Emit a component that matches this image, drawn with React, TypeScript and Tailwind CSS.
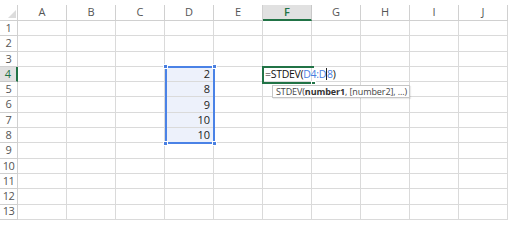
import React from 'react';

const cols = ['A', 'B', 'C', 'D', 'E', 'F', 'G', 'H', 'I', 'J'];
const rows = [1, 2, 3, 4, 5, 6, 7, 8, 9, 10, 11, 12, 13];
const values: Record<number, string> = { 4: '2', 5: '8', 6: '9', 7: '10', 8: '10' };

const Handle = ({ className }: { className: string }) => (
  <div className={`absolute w-[5px] h-[5px] bg-[#4a7fe0] border border-white ${className}`} />
);

export default function App() {
  return (
    <div className="relative w-[512px] h-[225px] bg-white overflow-hidden font-['Open_Sans','Noto_Sans',sans-serif]">
      <div className="pt-[5px]">
        <div className="grid grid-cols-[18px_repeat(10,49px)]">
          {/* corner */}
          <div className="relative h-[16px] border-r border-b border-[#d0d0d0]">
            <svg className="absolute right-[1px] bottom-[2px]" width="8" height="8" viewBox="0 0 8 8">
              <polygon points="8,0 8,8 0,8" fill="#dcdcdc" />
            </svg>
          </div>
          {cols.map((c) =>
            c === 'F' ? (
              <div
                key={c}
                className="h-[16px] flex items-center justify-center bg-[#e1e1e1] border-r border-[#c8c8c8] border-b-2 border-b-[#217346] text-[11px] font-semibold text-[#217346]"
              >
                {c}
              </div>
            ) : (
              <div
                key={c}
                className="h-[16px] flex items-center justify-center border-r border-b border-[#d0d0d0] text-[11px] text-[#555]"
              >
                {c}
              </div>
            )
          )}

          {rows.map((r) => (
            <React.Fragment key={r}>
              {r === 4 ? (
                <div className="h-[15.3px] flex items-center justify-center bg-[#e1e1e1] border-b border-[#c8c8c8] border-r-2 border-r-[#217346] text-[11px] text-[#217346]">
                  {r}
                </div>
              ) : (
                <div className="h-[15.3px] flex items-center justify-center border-r border-b border-[#d0d0d0] text-[11px] text-[#555] tracking-[-0.5px]">
                  {r}
                </div>
              )}
              {cols.map((c) => {
                const inRange = c === 'D' && r >= 4 && r <= 8;
                return (
                  <div
                    key={c}
                    className={`h-[15.3px] border-r border-b border-[#dadada] text-[11px] leading-[14px] text-[#222] ${
                      inRange ? 'bg-[#edf1fb] flex justify-end items-end pr-[3px]' : ''
                    }`}
                  >
                    {inRange && values[r]}
                  </div>
                );
              })}
            </React.Fragment>
          ))}
        </div>
      </div>

      {/* range selection D4:D8 */}
      <div className="absolute left-[165px] top-[66px] w-[50px] h-[78px] border-2 border-[#4a82e6]">
        <Handle className="-left-[4px] -top-[4px]" />
        <Handle className="-right-[4px] -top-[4px]" />
        <Handle className="-left-[4px] -bottom-[4px]" />
        <Handle className="-right-[4px] -bottom-[4px]" />
      </div>

      {/* active cell F4, in edit mode: text runs over the right edge */}
      <div className="absolute left-[262px] top-[66px] w-[52px] h-[18px] border-y-2 border-l-2 border-[#217346]">
        <div className="absolute -right-[2px] -bottom-[3px] w-[5px] h-[4px] bg-[#217346] border border-white" />
        <span className="absolute left-[1px] -top-[1px] z-10 whitespace-nowrap text-[10.5px] leading-[15px] tracking-[-0.3px] text-[#111]">
          =STDEV(
          <span className="text-[#4a7fe0]">D4:D</span>
          <span className="inline-block w-px h-[12px] bg-[#222] align-[-2px]" />
          <span className="text-[#4a7fe0]">8</span>)
        </span>
      </div>

      {/* function tooltip */}
      <div className="absolute left-[272px] top-[85px] w-[138px] h-[13px] bg-white border border-[#c6c6c6] shadow-[1px_1px_1px_rgba(0,0,0,0.08)] flex items-center pl-[3px] text-[9px] leading-[11px] tracking-[-0.1px] text-[#444] whitespace-nowrap">
        STDEV(<span className="font-bold text-[#333]">number1</span>, [number2], ...)
      </div>
    </div>
  );
}
